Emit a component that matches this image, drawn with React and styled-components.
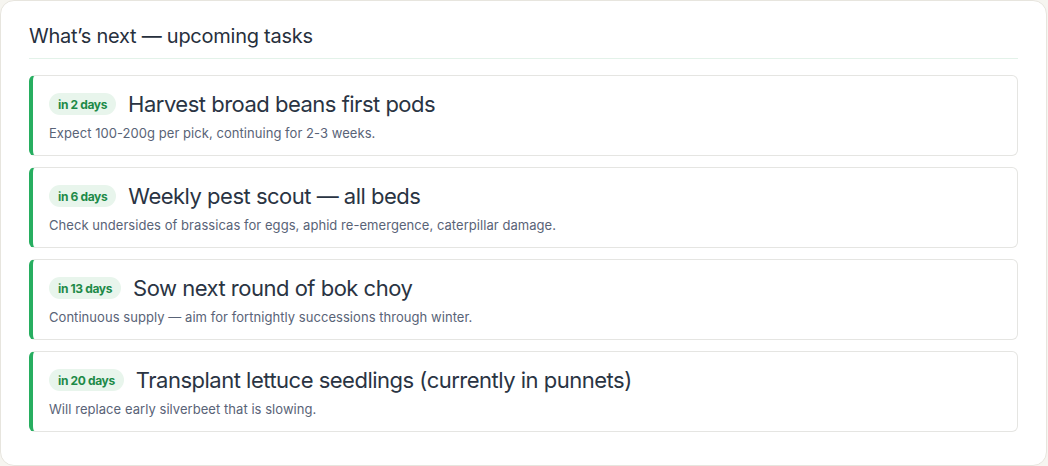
import React from "react";
import styled, { createGlobalStyle } from "styled-components";

const Global = createGlobalStyle`
  html, body { margin: 0; padding: 0; background: #f6f5f0; }
  body { font-family: Inter, "Noto Sans", sans-serif; }
  * { box-sizing: border-box; }
`;

const Panel = styled.section`
  width: 1047px;
  height: 466px;
  background: #ffffff;
  border: 1px solid #e7e5de;
  border-radius: 14px;
  padding: 21px 28px 28px 28px;
`;

const Heading = styled.h2`
  margin: 0;
  font-size: 20px;
  line-height: 28px;
  font-weight: 400;
  color: #27303d;
  letter-spacing: -0.25px;
  padding-bottom: 8px;
  border-bottom: 1px solid #e3f2e9;
`;

const List = styled.div`
  display: flex;
  flex-direction: column;
  gap: 11px;
  margin-top: 16px;
`;

const Card = styled.article`
  border: 1px solid #e5e5e2;
  border-left: 4px solid #27ae60;
  border-radius: 6px;
  padding: 14px 16px 14px 16px;
  height: 81px;
`;

const TitleRow = styled.div`
  display: flex;
  align-items: center;
  gap: 12px;
  height: 28px;
`;

const Badge = styled.span`
  display: inline-flex;
  align-items: center;
  height: 22px;
  padding: 0 9px;
  border-radius: 11px;
  background: #e8f5ec;
  color: #1d8a48;
  font-size: 12px;
  font-weight: 700;
  letter-spacing: -0.35px;
  white-space: nowrap;
`;

const Title = styled.h3`
  margin: 0;
  font-size: 22px;
  line-height: 28px;
  font-weight: 400;
  color: #2a3443;
  letter-spacing: -0.5px;
`;

const Desc = styled.p`
  margin: 6px 0 0 0;
  font-size: 13px;
  line-height: 18px;
  color: #596377;
  letter-spacing: 0.05px;
`;

const tasks = [
  { when: "in 2 days", title: "Harvest broad beans first pods", desc: "Expect 100-200g per pick, continuing for 2-3 weeks." },
  { when: "in 6 days", title: "Weekly pest scout — all beds", desc: "Check undersides of brassicas for eggs, aphid re-emergence, caterpillar damage." },
  { when: "in 13 days", title: "Sow next round of bok choy", desc: "Continuous supply — aim for fortnightly successions through winter." },
  { when: "in 20 days", title: "Transplant lettuce seedlings (currently in punnets)", desc: "Will replace early silverbeet that is slowing." },
];

export default function App() {
  return (
    <>
      <Global />
      <Panel>
        <Heading>What’s next — upcoming tasks</Heading>
        <List>
          {tasks.map((t) => (
            <Card key={t.title}>
              <TitleRow>
                <Badge>{t.when}</Badge>
                <Title>{t.title}</Title>
              </TitleRow>
              <Desc>{t.desc}</Desc>
            </Card>
          ))}
        </List>
      </Panel>
    </>
  );
}
